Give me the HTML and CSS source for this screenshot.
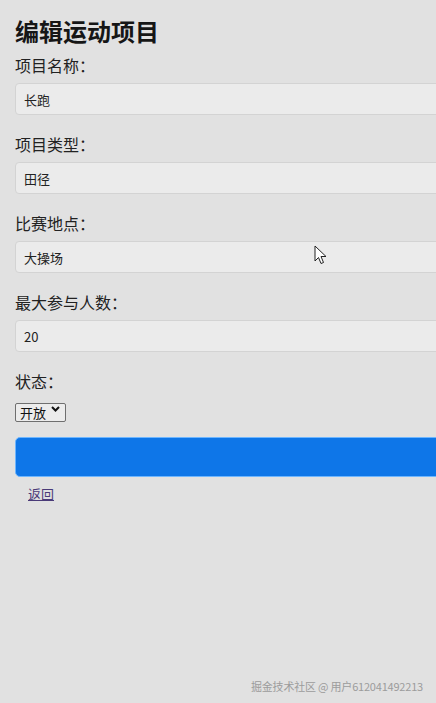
FILE: index.html
```html
<!DOCTYPE html>
<html lang="zh-CN">
<head>
<meta charset="utf-8">
<title>编辑运动项目</title>
<link rel="stylesheet" href="styles.css">
</head>
<body>
<div class="page">
  <h1 class="title">编辑运动项目</h1>
  <form class="form">
    <div class="group">
      <label class="label">项目名称：</label>
      <input class="field" type="text" value="长跑">
    </div>
    <div class="group">
      <label class="label">项目类型：</label>
      <input class="field" type="text" value="田径">
    </div>
    <div class="group">
      <label class="label">比赛地点：</label>
      <input class="field" type="text" value="大操场">
    </div>
    <div class="group">
      <label class="label">最大参与人数：</label>
      <input class="field" type="text" value="20">
    </div>
    <div class="group group-status">
      <label class="label">状态：</label>
      <span class="select-wrap">
        <select class="select">
          <option>开放</option>
          <option>关闭</option>
        </select>
        <svg class="chev" width="9" height="6" viewBox="0 0 9 6"><path d="M1 1 L4.5 4.5 L8 1" fill="none" stroke="#111" stroke-width="2"/></svg>
      </span>
    </div>
    <button class="submit" type="button"></button>
  </form>
  <div class="back"><a class="back-link" href="#">返回</a></div>
</div>
<svg class="cursor" width="14" height="21" viewBox="0 0 14 21"><path d="M1 1 L1 16 L4.5 12.5 L7 18.5 L9.5 17.5 L7 11.5 L12 11.5 Z" fill="#fff" stroke="#222" stroke-width="1" stroke-linejoin="round"/></svg>
<div class="watermark">掘金技术社区 @ 用户612041492213</div>
</body>
</html>
```
FILE: styles.css
```css
html, body {
  margin: 0;
  padding: 0;
  overflow: hidden;
  background: #e1e1e1;
  height: 100%;
}
body {
  font-family: "Noto Sans CJK SC", "Noto Sans", sans-serif;
  color: #1e1e1e;
  position: relative;
}
.page {
  padding: 17px 0 0 15px;
  width: 480px;
}
.title {
  margin: 0 0 10px 0;
  font-size: 24px;
  line-height: 28px;
  font-weight: 700;
  color: #161616;
}
.form {
  display: flex;
  flex-direction: column;
}
.group {
  display: flex;
  flex-direction: column;
  margin-bottom: 19px;
}
.label {
  font-size: 16px;
  line-height: 20px;
  margin-bottom: 8px;
  color: #222;
}
.field {
  box-sizing: border-box;
  height: 32px;
  width: 100%;
  margin: 0;
  padding: 0 8px;
  font-family: "Noto Sans CJK SC", "Noto Sans", sans-serif;
  font-size: 13px;
  color: #222;
  background: #ebebeb;
  border: 1px solid #d3d3d3;
  border-radius: 4px;
  outline: none;
}
.group-status .label {
  margin-bottom: 8px;
}
.group-status {
  margin-bottom: 14px;
}
.select-wrap {
  position: relative;
  display: inline-block;
  align-self: flex-start;
}
.select {
  appearance: none;
  -webkit-appearance: none;
  box-sizing: border-box;
  width: 51px;
  height: 19px;
  margin: 0;
  padding: 0 0 0 4px;
  font-family: "Noto Sans CJK SC", "Noto Sans", sans-serif;
  font-size: 13px;
  line-height: 17px;
  color: #111;
  background: #ececec;
  border: 1px solid #6f6f6f;
  border-radius: 2px;
}
.chev {
  position: absolute;
  right: 6px;
  top: 7px;
  pointer-events: none;
}
.submit {
  box-sizing: border-box;
  width: 100%;
  height: 40px;
  background: #0e76e8;
  border: 1px solid #6db6ff;
  border-radius: 5px;
  padding: 0;
  margin: 0;
}
.back {
  padding: 8px 0 0 13px;
  font-size: 13px;
  line-height: 18px;
}
.back-link {
  color: #4a3a78;
  text-decoration: underline;
}
.cursor {
  position: absolute;
  left: 314px;
  top: 245px;
}
.watermark {
  position: absolute;
  right: 13px;
  bottom: 9px;
  font-size: 11px;
  color: #9c9c9c;
  letter-spacing: -0.2px;
}
```
